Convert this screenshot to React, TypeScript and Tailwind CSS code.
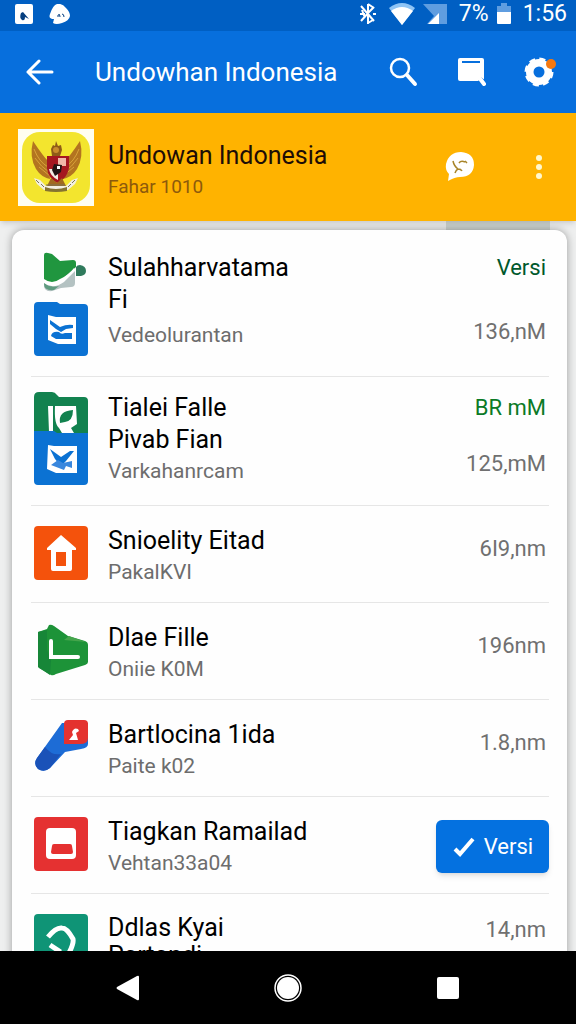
import type { ReactNode } from "react";
import clsx from "clsx";

interface FileItem {
  id: string;
  title: string[];
  titleClass?: string;
  subtitle?: string;
  subtitleClass?: string;
  status?: string;
  statusClass?: string;
  size?: string;
  action?: string;
  icon: ReactNode;
  rowClass: string;
}

function GreenCupIcon() {
  return (
    <svg viewBox="0 0 54 42" className="w-full" aria-hidden="true">
      <path d="M42 15q1-2 4-2 6 1 6 6 0 4-5 5h-5z" fill="#2f7a5c" />
      <path d="M10 28 41 13V31q0 4-4 4l-10 1-9 3q-8 1-8-6z" fill="#b4c2c2" />
      <path d="M10 30q4 6 15 4l-5 4q-10 1-10-6z" fill="#5f9b80" />
      <path d="M10 3q0-3 4-2l4 1 8 7 13-1q3 0 3 3v4L28 27q-8 8-18 3z" fill="#20963f" />
      <path d="M10 27q8 6 16 0 9-4 14-11l2 2q-6 6-12 12-11 8-20 1z" fill="#fff" />
    </svg>
  );
}

function BlueFileIcon() {
  return (
    <svg viewBox="0 0 54 54" className="w-full" aria-hidden="true">
      <path d="M4 0H23l3 2H50q4 0 4 4V50q0 4-4 4H4q-4 0-4-4V4Q0 0 4 0z" fill="#0b72d3" />
      <path d="M14 13l8 2H42V42H24L14 38z" fill="#fff" />
      <path d="M16 18l10 7q7-3 13-2v3l-7 1-5 3-5-3-6-5z" fill="#0b72d3" />
      <path d="M17 34q1-5 8-4 2 3 6 1h7v6H22z" fill="#0b72d3" />
    </svg>
  );
}

function GreenAndBlueIcon() {
  return (
    <svg viewBox="0 0 54 93" className="w-full" aria-hidden="true">
      <path d="M5 0H18q3 0 5 3l2 2H50q4 0 4 4V50H0V5q0-5 5-5z" fill="#12824f" />
      <path d="M14 14h5v26h-4zM21 14h21l1 18-6 4 3 5H28l-3-5q-5-4-4-22z" fill="#fff" />
      <path d="M26 31q-2-12 13-13 0 11-8 12z" fill="#12824f" />
      <path d="M0 39h20l3 2h31V89q0 4-4 4H4q-4 0-4-4z" fill="#0b72d3" />
      <path d="M14 53l6 1h23v27H22l-9-4z" fill="#fff" />
      <path d="M16 57l11 8 9-6h4l-8 10-5 5-6-7z" fill="#0b72d3" />
      <path d="M17 73l7-5 5 3 9-2v7l-6-2-2 4z" fill="#3987dd" />
    </svg>
  );
}

function HouseIcon() {
  return (
    <svg viewBox="0 0 54 54" className="w-full" aria-hidden="true">
      <rect width="54" height="54" rx="4" fill="#f4520c" />
      <path d="M27 9 42 22v2H38V43q0 2-2 2H19q-2 0-2-2V24H13V22z" fill="#fff" />
      <path d="M22 26h10v14H22z" fill="#f4520c" />
    </svg>
  );
}

function GreenBoxIcon() {
  return (
    <svg viewBox="0 0 54 54" className="w-full" aria-hidden="true">
      <path d="M4 9l9-3 2-4q2-1 5 1l14 10 17 5q3 1 3 4v17q0 2-3 3L22 51q-3 2-5 1L5 45q-1-1-1-3z" fill="#1d9338" />
      <path d="M13 7v20l4 10-1 15L4 44V9z" fill="#178638" />
      <path d="M30 17l5-4 17 6z" fill="#45a54c" />
      <path d="M17 18v16h27" fill="none" stroke="#fff" strokeWidth="4" strokeLinecap="round" />
    </svg>
  );
}

function WrenchIcon() {
  return (
    <svg viewBox="0 0 54 54" className="w-full" aria-hidden="true">
      <path d="M28 3h26v21q0 4-7 5l-16 3-15 16q-6 5-12 1-5-5-1-11z" fill="#1d6cd6" />
      <path d="M11 27q7 9 16 7L16 48q-6 5-12 1-5-5-1-11z" fill="#1a52b8" />
      <path d="M34 0h16q4 0 4 4v14q0 6-8 6H30V4q0-4 4-4z" fill="#e4322f" />
      <path d="M35 20l4-5-1-3q2-5 6-3l1 2-3 2 2 7z" fill="#fff" />
    </svg>
  );
}

function RedCardIcon() {
  return (
    <svg viewBox="0 0 54 54" className="w-full" aria-hidden="true">
      <rect width="54" height="54" rx="4" fill="#e53131" />
      <rect x="12" y="11" width="30" height="31" rx="4" fill="#fff" />
      <path d="M20 27h16q2 0 2 2l1 6q0 2-2 2H19q-2 0-2-2l1-6q0-2 2-2z" fill="#e53131" />
    </svg>
  );
}

function TealArrowIcon() {
  return (
    <svg viewBox="0 0 54 54" className="w-full" aria-hidden="true">
      <rect width="54" height="54" rx="4" fill="#0f9476" />
      <path d="M14 23q8-10 14-9 5 0 11 11 1 4-4 14M16 31l9 6-1 8" fill="none" stroke="#fff" strokeWidth="5" />
    </svg>
  );
}

const files: FileItem[] = [
  {
    id: "sulah",
    title: ["Sulahharvatama", "Fi"],
    subtitle: "Vedeolurantan",
    subtitleClass: "pt-1",
    status: "Versi",
    statusClass: "mb-8 text-[#00582c]",
    size: "136,nM",
    icon: (
      <div className="flex flex-col gap-2">
        <GreenCupIcon />
        <BlueFileIcon />
      </div>
    ),
    rowClass: "pt-[22px] pb-[26px]",
  },
  {
    id: "tialei",
    title: ["Tialei Falle", "Pivab Fian"],
    subtitle: "Varkahanrcam",
    status: "BR mM",
    statusClass: "mb-6 text-[#0b7a26]",
    size: "125,mM",
    icon: <GreenAndBlueIcon />,
    rowClass: "pt-[15px] pb-[19px]",
  },
  {
    id: "snioelity",
    title: ["Snioelity Eitad"],
    subtitle: "PakalKVI",
    size: "6I9,nm",
    icon: <HouseIcon />,
    rowClass: "pt-[19px] pb-[15px]",
  },
  {
    id: "dlae",
    title: ["Dlae Fille"],
    subtitle: "Oniie K0M",
    size: "196nm",
    icon: <GreenBoxIcon />,
    rowClass: "pt-[19px] pb-[15px]",
  },
  {
    id: "bartlocina",
    title: ["Bartlocina 1ida"],
    subtitle: "Paite k02",
    size: "1.8,nm",
    icon: <WrenchIcon />,
    rowClass: "pt-[19px] pb-[15px]",
  },
  {
    id: "tiagkan",
    title: ["Tiagkan Ramailad"],
    subtitle: "Vehtan33a04",
    action: "Versi",
    icon: <RedCardIcon />,
    rowClass: "pt-[19px] pb-[15px]",
  },
  {
    id: "ddlas",
    title: ["Ddlas Kyai", "Partandi"],
    titleClass: "leading-7",
    size: "14,nm",
    icon: <TealArrowIcon />,
    rowClass: "pt-5 pb-[15px]",
  },
];

function StatusBar() {
  return (
    <div className="flex h-[31px] shrink-0 items-center justify-between bg-[#005fc3] pr-[9px] pb-1 pl-[15px] text-white">
      <div className="flex items-center gap-4">
        <svg viewBox="0 0 18 20" className="h-5 w-[18px]" aria-hidden="true">
          <rect width="18" height="20" rx="2" fill="currentColor" />
          <path d="M6 9q-2 5 1 7 3 1 3-3l4 2-6-7z" fill="#063f80" />
        </svg>
        <svg viewBox="0 0 22 20" className="h-5 w-[22px]" aria-hidden="true">
          <path d="M8 0q5-1 9 4 4 4 4 8-1 5-8 7-6 2-9 0l1-4q-6 0-4-5 3-9 7-10z" fill="currentColor" />
          <path d="M9 13V11q2-2 2 2M13 10q2 0 2 3" stroke="#063f80" strokeWidth="1" fill="none" />
        </svg>
      </div>
      <div className="flex items-center text-[23px] leading-6">
        <svg viewBox="0 0 18 22" className="mr-3 h-[22px] w-[18px]" fill="none" stroke="currentColor" strokeWidth="2" aria-hidden="true">
          <path d="M2 3l13 15M2 18 10 9 15 4M9 1v20M9 1l6 4M9 20l5-3M1 11h5M14 11h3M3 7l3 8" />
        </svg>
        <svg viewBox="0 0 26 22" className="mr-2 h-[22px] w-[26px]" aria-hidden="true">
          <path d="M0 5q13-10 26 0L13 22z" fill="#8fc4f5" />
          <path d="M2 8q11-8 22 0L13 22z" fill="currentColor" />
        </svg>
        <svg viewBox="0 0 24 20" className="mr-3 h-5 w-6" aria-hidden="true">
          <path d="M0 0H24V20H4l7-8z" fill="#5f9de0" />
          <path d="M5 20 16 9V20z" fill="currentColor" />
        </svg>
        <span className="mr-2">7%</span>
        <svg viewBox="0 0 14 22" className="mr-3 h-[22px] w-[14px]" aria-hidden="true">
          <path d="M4 0h6v3h4v9H0V3h4z" fill="#5f9de0" />
          <path d="M0 9h14v11q0 1-1 1H1q-1 0-1-1z" fill="currentColor" />
        </svg>
        <span>1:56</span>
      </div>
    </div>
  );
}

function AppBar() {
  return (
    <header className="flex h-[82px] shrink-0 items-center bg-[#076fdd] pr-5 pl-[26px] text-white">
      <button type="button" aria-label="Back" className="mr-[41px]">
        <svg viewBox="0 0 28 28" className="size-7" fill="none" stroke="currentColor" strokeWidth="3" strokeLinecap="round" strokeLinejoin="round" aria-hidden="true">
          <path d="M13 3 2 14l11 11M2 14h24" />
        </svg>
      </button>
      <h1 className="min-w-0 flex-1 truncate text-[26px] leading-9">Undowhan Indonesia</h1>
      <div className="flex items-center gap-[38px]">
        <button type="button" aria-label="Search">
          <svg viewBox="0 0 30 30" className="size-[30px]" fill="none" stroke="currentColor" strokeLinecap="round" aria-hidden="true">
            <circle cx="12" cy="11" r="9" strokeWidth="2.5" />
            <path d="M19 18l8 9" strokeWidth="4" />
          </svg>
        </button>
        <button type="button" aria-label="Find in page">
          <svg viewBox="0 0 30 30" className="size-[30px]" aria-hidden="true">
            <path d="M4 1H26q2 0 2 2V24H4q-2 0-2-2V3q0-2 2-2z" fill="currentColor" />
            <path d="M6 5h18" stroke="#076fdd" strokeWidth="2" />
            <path d="M23 23l5 4" stroke="#076fdd" strokeWidth="7" />
            <path d="M22 19l6 8" stroke="currentColor" strokeWidth="4" strokeLinecap="round" />
          </svg>
        </button>
        <button type="button" aria-label="Settings">
          <svg viewBox="0 0 32 32" className="size-8" aria-hidden="true">
            <circle cx="15" cy="16" r="13" fill="currentColor" />
            <circle cx="15" cy="16" r="13" fill="none" stroke="currentColor" strokeWidth="3" strokeDasharray="6 4.2" />
            <circle cx="15" cy="16" r="5.5" fill="#076fdd" />
            <circle cx="27" cy="8" r="5" fill="#f5780f" />
          </svg>
        </button>
      </div>
    </header>
  );
}

function Emblem() {
  return (
    <svg viewBox="0 0 76 77" className="mr-[14px] h-[77px] w-[76px] shrink-0" role="img" aria-label="Garuda emblem">
      <path d="M0 0h76v77H0z" fill="#fffef0" />
      <rect x="4" y="3" width="68" height="71" rx="18" fill="#f3e52e" />
      <path d="M15 12q10 15 15 20l2 18q-9-2-14-10-7-12-3-28z" fill="#b37420" />
      <path d="M62 12Q52 27 47 32l-2 18q9-2 14-10 7-12 3-28z" fill="#b37420" />
      <path d="M16 20q5 13 14 18M17 29q6 9 14 14M21 38l11 9M61 20q-5 13-14 18M60 29q-6 9-14 14M56 38l-11 9" stroke="#d9a33a" strokeWidth="1" fill="none" />
      <path d="M33 20l2-4 2 1 1-5 2 5 3-1 1 5-2 6h-8z" fill="#8f5b17" />
      <circle cx="38" cy="21" r="3" fill="#c98d2c" />
      <path d="M29 27h22v12q-2 11-12 15-9-5-10-15z" fill="#a51720" />
      <path d="M40 29h8v8h-8z" fill="#f0b8a8" />
      <path d="M31 40h9v11q-8-4-9-11z" fill="#f4eee4" />
      <path d="M36 35l8 1-1 7-6 4-3-6z" fill="#221414" />
      <path d="M39 37h3v3h-3z" fill="#fff" />
      <path d="M33 49l6 5 5-5 4 8H29z" fill="#a06a1e" />
      <path d="M16 49l6 2 6 6h20l6-6 6-2-3 6-7 6H26l-7-6z" fill="#f2efdf" />
      <path d="M27 58q11 4 22 0v4q-11 2-22 0z" fill="#857331" />
      <path d="M18 51l3 3M23 55l3 3M57 51l-3 3M53 55l-3 3M28 56h19" stroke="#7b7556" strokeWidth="1" />
    </svg>
  );
}

function AccountBanner() {
  return (
    <section className="z-10 flex h-[108px] shrink-0 items-center bg-[#ffb300] pr-[33px] pl-[18px] shadow-md">
      <Emblem />
      <div className="min-w-0 flex-1 pt-2">
        <h2 className="truncate text-[25px] leading-8 text-[#1d0d06]">Undowan Indonesia</h2>
        <p className="text-[19px] leading-[30px] text-[#8d5a0c]">Fahar 1010</p>
      </div>
      <button type="button" aria-label="Chat" className="mr-[60px]">
        <svg viewBox="0 0 30 30" className="size-[30px]" aria-hidden="true">
          <path d="M16 0q13 1 13 13-1 12-14 12-5 0-12 4l1-7Q0 18 1 12 4 0 16 0z" fill="#fff" />
          <path d="M8 9q1 5 5 8 3 0 4 2M14 11q2-3 6-1M10 21q1-3 3-4M20 9l2 2" stroke="#a8852a" strokeWidth="1.5" fill="none" />
        </svg>
      </button>
      <button type="button" aria-label="More options">
        <svg viewBox="0 0 8 26" className="h-[26px] w-2" fill="#fff8cf" aria-hidden="true">
          <circle cx="4" cy="4" r="3" />
          <circle cx="4" cy="13" r="3" />
          <circle cx="4" cy="22" r="3" />
        </svg>
      </button>
    </section>
  );
}

function FileRow({ file }: { file: FileItem }) {
  const twoLines = file.title.length > 1;

  return (
    <li className={clsx("flex gap-5 border-b border-[#e6e6e6] px-[3px]", file.rowClass)}>
      <div className={clsx("w-[54px] shrink-0", file.status ? "h-0" : "h-14", !twoLines && "pt-px")}>
        {file.icon}
      </div>
      <div className="min-w-0 flex-1">
        <h3 className={clsx("text-[25px] text-black", file.titleClass ?? "leading-8")}>
          {file.title.map((line) => (
            <span key={line} className="block truncate">
              {line}
            </span>
          ))}
        </h3>
        {file.subtitle && (
          <p className={clsx("text-[21px] leading-[30px] text-[#6d6d6d]", file.subtitleClass)}>
            {file.subtitle}
          </p>
        )}
      </div>
      {file.action ? (
        <button
          type="button"
          className="mt-1 -mr-[3px] flex h-[53px] w-[113px] items-center justify-center gap-2 rounded-md bg-[#0471e0] text-[22px] text-white shadow-md"
        >
          <svg viewBox="0 0 24 24" className="size-6" fill="none" stroke="currentColor" strokeWidth="4" aria-hidden="true">
            <path d="M3 14l5 5L21 4" />
          </svg>
          {file.action}
        </button>
      ) : (
        <div className="flex shrink-0 flex-col items-end text-[22px] leading-8">
          {file.status && <span className={file.statusClass}>{file.status}</span>}
          <span className={clsx("text-[#707070]", !twoLines && "mt-2")}>{file.size}</span>
        </div>
      )}
    </li>
  );
}

function NavBar() {
  return (
    <nav className="flex h-[73px] shrink-0 items-center justify-center gap-[134px] bg-black text-white">
      <button type="button" aria-label="Back">
        <svg viewBox="0 0 24 26" className="h-[26px] w-6" aria-hidden="true">
          <path d="M1 12 21 1q2-1 2 1v22q0 2-2 1L1 14q-1-1 0-2z" fill="currentColor" />
        </svg>
      </button>
      <button type="button" aria-label="Home">
        <svg viewBox="0 0 28 28" className="size-7" aria-hidden="true">
          <circle cx="14" cy="14" r="13" fill="none" stroke="currentColor" strokeWidth="1.5" />
          <circle cx="14" cy="14" r="11" fill="currentColor" />
        </svg>
      </button>
      <button type="button" aria-label="Recent apps">
        <svg viewBox="0 0 24 24" className="size-6" aria-hidden="true">
          <rect x="1" y="1" width="22" height="22" rx="2" fill="currentColor" />
        </svg>
      </button>
    </nav>
  );
}

export default function App() {
  return (
    <div className="flex h-screen flex-col overflow-hidden bg-[#eeefef] font-[Roboto,sans-serif]">
      <StatusBar />
      <AppBar />
      <AccountBanner />
      <main className="min-h-0 flex-1 overflow-hidden pr-[9px] pl-3">
        <div className="mr-[17px] ml-auto h-[9px] w-[104px] bg-[#cfd5d2]" />
        <ul className="rounded-t-xl bg-[#fefefe] pr-[18px] pl-[19px] shadow-[0_0_8px_rgba(0,0,0,0.35)]">
          {files.map((file) => (
            <FileRow key={file.id} file={file} />
          ))}
        </ul>
      </main>
      <NavBar />
    </div>
  );
}
